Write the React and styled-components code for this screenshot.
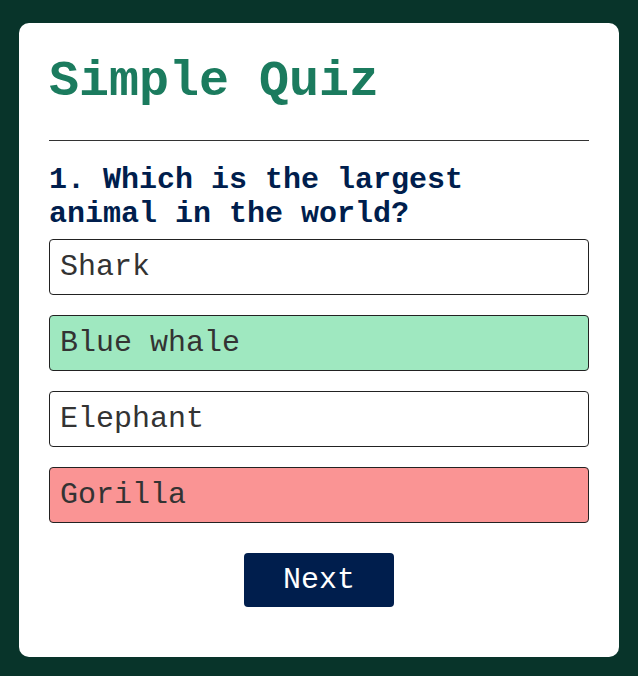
import React from 'react'
import styled, { createGlobalStyle } from 'styled-components'

const GlobalStyle = createGlobalStyle`
  body {
    margin: 0;
    background: #08342a;
    font-family: "Courier New", "Nimbus Mono PS", "FreeMono", "Liberation Mono", monospace;
  }
`

const Page = styled.div`
  padding: 23px 0 19px;
`

const Card = styled.div`
  width: 600px;
  margin: 0 auto;
  box-sizing: border-box;
  background: #fff;
  border-radius: 10px;
  padding: 30px 30px 50px;
`

const Title = styled.h1`
  margin: 0;
  padding-bottom: 30px;
  border-bottom: 1px solid #333;
  font-size: 50px;
  line-height: 57px;
  color: #1b7b5e;
`

const Question = styled.h2`
  margin: 22px 0 8px;
  font-size: 30px;
  line-height: 34px;
  color: #001e4d;
`

const Answers = styled.ul`
  list-style: none;
  margin: 0;
  padding: 0;
  display: flex;
  flex-direction: column;
  gap: 20px;
`

const backgrounds = {
  correct: '#9fe8c0',
  wrong: '#fa9494',
  idle: '#fff',
}

const Answer = styled.li`
  border: 1px solid #222;
  border-radius: 4px;
  padding: 10px;
  font-size: 30px;
  line-height: 34px;
  color: #333;
  background: ${({ $state }) => backgrounds[$state]};
`

const NextButton = styled.button`
  display: block;
  margin: 30px auto 0;
  width: 150px;
  height: 54px;
  border: 0;
  border-radius: 4px;
  background: #001e4d;
  color: #fff;
  font-family: inherit;
  font-size: 30px;
  cursor: pointer;
`

const answers = [
  { text: 'Shark', state: 'idle' },
  { text: 'Blue whale', state: 'correct' },
  { text: 'Elephant', state: 'idle' },
  { text: 'Gorilla', state: 'wrong' },
]

export default function App() {
  return (
    <Page>
      <GlobalStyle />
      <Card>
        <Title>Simple Quiz</Title>
        <Question>1. Which is the largest animal in the world?</Question>
        <Answers>
          {answers.map(a => (
            <Answer key={a.text} $state={a.state}>{a.text}</Answer>
          ))}
        </Answers>
        <NextButton>Next</NextButton>
      </Card>
    </Page>
  )
}
